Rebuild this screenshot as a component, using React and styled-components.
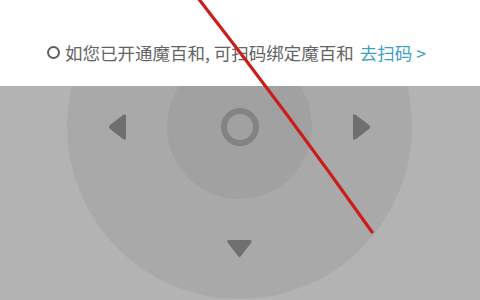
import React from 'react';
import styled, { createGlobalStyle } from 'styled-components';

const GlobalStyle = createGlobalStyle`
    html, body {
        margin: 0;
        padding: 0;
        width: 480px;
        height: 300px;
        overflow: hidden;
        background: #fff;
    }
    #root {
        height: 300px;
    }
`;

const Page = styled.div`
    position: relative;
    width: 480px;
    height: 300px;
    display: flex;
    flex-direction: column;
    font-family: "Noto Sans CJK SC", "Noto Sans", sans-serif;
    overflow: hidden;
`;

const Notice = styled.div`
    height: 86px;
    box-sizing: border-box;
    padding: 18px 0 0 47px;
    display: flex;
    align-items: center;
    background: #fff;
    font-size: 17.5px;
    color: #646464;
    white-space: nowrap;
`;

const Radio = styled.span`
    width: 13px;
    height: 13px;
    box-sizing: border-box;
    border: 2px solid #5e5e5e;
    border-radius: 50%;
    margin-right: 5px;
    flex-shrink: 0;
`;

const ScanLink = styled.span`
    color: #3e9fc4;
    margin-left: 6px;
`;

const RemoteArea = styled.div`
    flex: 1;
    background: #b3b3b3;
    display: flex;
    justify-content: center;
    overflow: hidden;
`;

const Dial = styled.div`
    width: 345px;
    height: 345px;
    flex-shrink: 0;
    margin-top: -132px;
    margin-left: -1px;
    border-radius: 50%;
    background: #a9a9a9;
    display: grid;
    grid-template-columns: 100px 145px 100px;
    grid-template-rows: 100px 145px 100px;
`;

const Cell = styled.div`
    grid-column: ${p => p.col};
    grid-row: ${p => p.row};
    display: flex;
    align-items: center;
    justify-content: center;
`;

const OkButton = styled.div`
    width: 145px;
    height: 145px;
    border-radius: 50%;
    background: #a1a1a1;
    display: flex;
    align-items: center;
    justify-content: center;
`;

const Ring = styled.div`
    width: 38px;
    height: 38px;
    box-sizing: border-box;
    border: 6.5px solid #838383;
    border-radius: 50%;
`;

const Overlay = styled.svg`
    position: absolute;
    left: 0;
    top: 0;
    pointer-events: none;
`;

const arrowPaths = {
    left: 'M2 13 Q0 15 2 17 L15 27 Q18 29 18 26 L18 4 Q18 1 15 3 Z',
    right: 'M16 13 Q18 15 16 17 L3 27 Q0 29 0 26 L0 4 Q0 1 3 3 Z',
    down: 'M11 16 Q12.5 18 14 16 L24 3 Q26 0 23 0 L2 0 Q-1 0 1 3 Z',
    up: 'M11 2 Q12.5 0 14 2 L24 15 Q26 18 23 18 L2 18 Q-1 18 1 15 Z',
};

const Arrow = ({ dir }) => {
    const vertical = dir === 'up' || dir === 'down';
    const w = vertical ? 25 : 18;
    const h = vertical ? 18 : 30;
    return (
        <svg width={w} height={h} viewBox={`0 0 ${w} ${h}`}>
            <path d={arrowPaths[dir]} fill="#6f6f6f" />
        </svg>
    );
};

const App = () => {
    return (
        <Page>
            <GlobalStyle />
            <Notice>
                <Radio />
                如您已开通魔百和, 可扫码绑定魔百和
                <ScanLink>去扫码 &gt;</ScanLink>
            </Notice>
            <RemoteArea>
                <Dial>
                    <Cell col={2} row={1}><Arrow dir="up" /></Cell>
                    <Cell col={1} row={2}><Arrow dir="left" /></Cell>
                    <Cell col={2} row={2}>
                        <OkButton><Ring /></OkButton>
                    </Cell>
                    <Cell col={3} row={2}><Arrow dir="right" /></Cell>
                    <Cell col={2} row={3}><Arrow dir="down" /></Cell>
                </Dial>
            </RemoteArea>
            {/* red pen stroke drawn over the screenshot */}
            <Overlay width="480" height="300">
                <path
                    d="M198 -2 Q287 112 372 232"
                    fill="none"
                    stroke="#cc1d1d"
                    strokeWidth="3.2"
                    strokeLinecap="round"
                />
            </Overlay>
        </Page>
    );
};

export default App;
